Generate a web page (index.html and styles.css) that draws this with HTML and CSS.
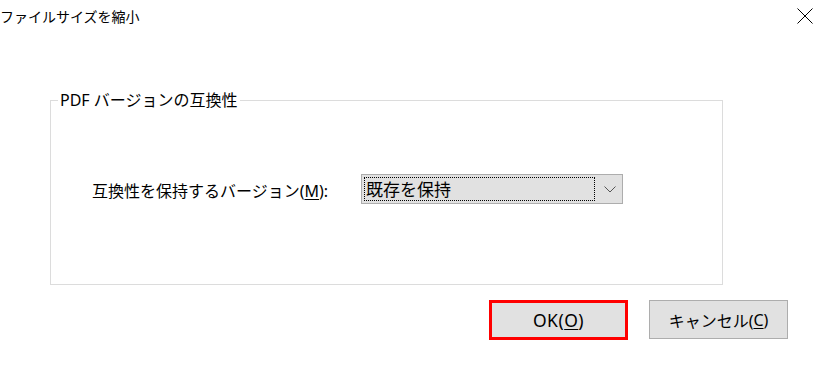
FILE: index.html
```html
<!DOCTYPE html>
<html lang="ja">
<head>
<meta charset="utf-8">
<title>ファイルサイズを縮小</title>
<link rel="stylesheet" href="styles.css">
</head>
<body>
<div class="dialog">
  <div class="titlebar">
    <span class="title">ファイルサイズを縮小</span>
    <span class="close">
      <svg width="16" height="16" viewBox="0 0 16 16"><path d="M0.5 0.5 L15.5 15.5 M15.5 0.5 L0.5 15.5" stroke="#000" stroke-width="1" fill="none"/></svg>
    </span>
  </div>
  <div class="content">
    <fieldset class="group">
      <legend class="legend">PDF バージョンの互換性</legend>
      <div class="row">
        <span class="label">互換性を保持するバージョン(<u>M</u>):</span>
        <div class="combo">
          <div class="combo-value">既存を保持</div>
          <div class="combo-arrow">
            <svg width="12" height="7" viewBox="0 0 12 7"><path d="M0.5 0.5 L6 6 L11.5 0.5" stroke="#555" stroke-width="1" fill="none"/></svg>
          </div>
        </div>
      </div>
    </fieldset>
    <div class="buttons">
      <div class="btn btn-ok">OK(<u>O</u>)</div>
      <div class="btn btn-cancel">キャンセル(<u>C</u>)</div>
    </div>
  </div>
</div>
</body>
</html>
```

FILE: styles.css
```css
html, body {
  margin: 0;
  padding: 0;
  background: #ffffff;
}
body {
  font-family: "Noto Sans", "Noto Sans CJK JP", sans-serif;
  color: #000;
  width: 825px;
  height: 375px;
  overflow: hidden;
}
.dialog {
  display: flex;
  flex-direction: column;
}
.titlebar {
  height: 34px;
  display: flex;
  align-items: center;
  justify-content: space-between;
  padding-right: 12px;
}
.title {
  font-size: 14px;
  line-height: 20px;
  padding-bottom: 1px;
}
.close {
  display: flex;
  width: 16px;
  height: 16px;
  margin-top: -3px;
}
.content {
  padding-top: 55px;
  display: flex;
  flex-direction: column;
}
.group {
  margin: 0 0 0 50px;
  width: 673px;
  box-sizing: border-box;
  height: 196px;
  padding: 0;
  border: 1px solid #dcdcdc;
  min-width: 0;
}
.legend {
  font-size: 16px;
  line-height: 22px;
  margin-left: 7px;
  padding: 0 2px;
}
.row {
  display: flex;
  align-items: center;
  padding: 63px 0 0 41px;
}
.label {
  width: 269px;
  font-size: 16px;
  line-height: 20px;
  padding-top: 4px;
}
.label u, .btn u {
  text-underline-offset: 2px;
}
.combo {
  width: 262px;
  height: 30px;
  box-sizing: border-box;
  border: 1px solid #adadad;
  background: #e1e1e1;
  display: flex;
  align-items: stretch;
}
.combo-value {
  margin: 2px 0 2px 2px;
  width: 231px;
  box-sizing: border-box;
  border: 1px dotted #000;
  font-size: 17px;
  line-height: 22px;
  padding: 1px 0 0 1px;
}
.combo-arrow {
  flex: 1;
  display: flex;
  align-items: center;
  justify-content: center;
  padding-left: 3px;
}
.buttons {
  display: flex;
  justify-content: flex-end;
  gap: 21px;
  padding: 15px 37px 0 0;
}
.btn {
  width: 139px;
  height: 40px;
  box-sizing: border-box;
  background: #e1e1e1;
  display: flex;
  align-items: center;
  justify-content: center;
  font-size: 16px;
}
.btn-ok {
  border: 3px solid #ff0000;
  font-size: 17.5px;
  letter-spacing: 0.5px;
}
.btn-cancel {
  border: 1px solid #adadad;
  height: 39px;
}
```
